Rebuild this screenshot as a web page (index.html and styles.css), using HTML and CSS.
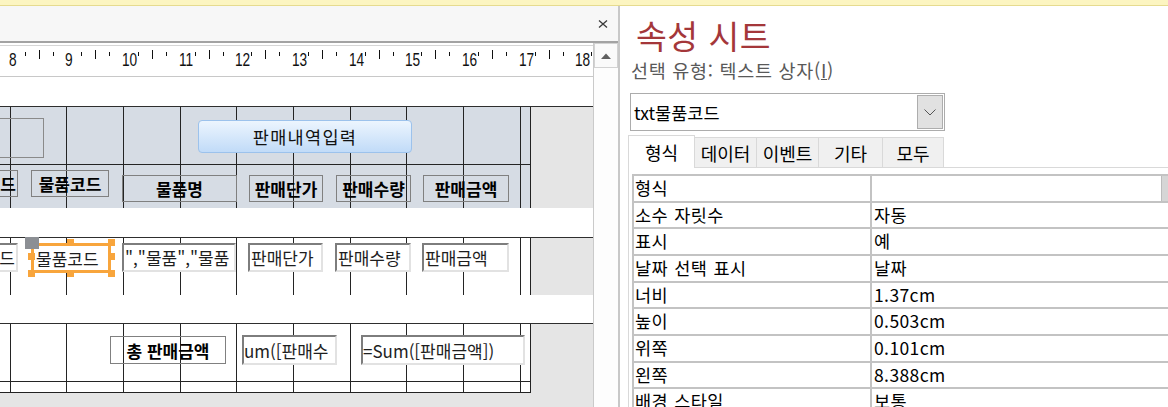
FILE: index.html
```html
<!DOCTYPE html>
<html lang="ko">
<head>
<meta charset="utf-8">
<title>속성 시트</title>
<link rel="stylesheet" href="styles.css">
</head>
<body>
<div class="topbar"></div>
<div class="main">
  <section class="designer">
    <div class="titlebar">
      <svg class="close" width="10" height="10" viewBox="0 0 10 10"><path d="M1 1.5L9 8.5M9 1.5L1 8.5" stroke="#3a3a3a" stroke-width="1.3" fill="none"/></svg>
    </div>
    <div class="dbody">
      <div class="canvas">
        <div class="ruler">
          <div class="rc"><span class="rn">8</span></div>
          <div class="rc"><span class="rn">9</span></div>
          <div class="rc"><span class="rn">10</span></div>
          <div class="rc"><span class="rn">11</span></div>
          <div class="rc"><span class="rn">12</span></div>
          <div class="rc"><span class="rn">13</span></div>
          <div class="rc"><span class="rn">14</span></div>
          <div class="rc"><span class="rn">15</span></div>
          <div class="rc"><span class="rn">16</span></div>
          <div class="rc"><span class="rn">17</span></div>
          <div class="rc"><span class="rn">18</span></div>
        </div>

        <div class="bar"></div>
        <div class="sec">
          <div class="form hdr">
            <div class="ctl box0"></div>
            <div class="ctl btn">판매내역입력</div>
            <div class="ctl lbl l0">판매코드</div>
            <div class="ctl lbl l1">물품코드</div>
            <div class="ctl lbl l2">물품명</div>
            <div class="ctl lbl l3">판매단가</div>
            <div class="ctl lbl l4">판매수량</div>
            <div class="ctl lbl l5">판매금액</div>
          </div>
        </div>

        <div class="bar"></div>
        <div class="sec">
          <div class="form det">
            <div class="ctl tb t0">판매코드</div>
            <div class="ctl sel">물품코드</div>
            <div class="mv"></div>
            <div class="hd hx1 hy1"></div>
            <div class="hd hx2 hy1"></div>
            <div class="hd hx0 hy2"></div>
            <div class="hd hx2 hy2"></div>
            <div class="hd hx0 hy3"></div>
            <div class="hd hx1 hy3"></div>
            <div class="hd hx2 hy3"></div>
            <div class="ctl tb t2">","물품","물품</div>
            <div class="ctl tb t3">판매단가</div>
            <div class="ctl tb t4">판매수량</div>
            <div class="ctl tb t5">판매금액</div>
          </div>
        </div>

        <div class="bar bar3"></div>
        <div class="sec">
          <div class="form ftr">
            <div class="ctl lbl f1">총 판매금액</div>
            <div class="ctl tb f2">um([판매수</div>
            <div class="ctl tb f3">=Sum([판매금액])</div>
          </div>
        </div>
      </div>
      <div class="vscroll">
        <div class="sbtn"><svg width="10" height="6" viewBox="0 0 10 6"><path d="M0 6L5 0.5L10 6Z" fill="#606060"/></svg></div>
      </div>
    </div>
  </section>

  <section class="props">
    <div class="ptitle">속성 시트</div>
    <div class="psub">선택 유형: 텍스트 상자(<u>I</u>)</div>
    <div class="combo">
      <span class="ctext">txt물품코드</span>
      <span class="cbtn"><svg width="12" height="7" viewBox="0 0 12 7"><path d="M0.5 0.5L6 6L11.5 0.5" stroke="#555" stroke-width="1" fill="none"/></svg></span>
    </div>
    <div class="tabs">
      <div class="tab active w1">형식</div>
      <div class="tab w2">데이터</div>
      <div class="tab w3">이벤트</div>
      <div class="tab w4">기타</div>
      <div class="tab w5">모두</div>
    </div>
    <div class="tabbody">
      <div class="pgrid">
        <div class="pk">형식</div><div class="pv pcombo"><span class="stub"></span></div>
        <div class="pk">소수 자릿수</div><div class="pv">자동</div>
        <div class="pk">표시</div><div class="pv">예</div>
        <div class="pk">날짜 선택 표시</div><div class="pv">날짜</div>
        <div class="pk">너비</div><div class="pv">1.37cm</div>
        <div class="pk">높이</div><div class="pv">0.503cm</div>
        <div class="pk">위쪽</div><div class="pv">0.101cm</div>
        <div class="pk">왼쪽</div><div class="pv">8.388cm</div>
        <div class="pk">배경 스타일</div><div class="pv">보통</div>
      </div>
    </div>
  </section>
</div>
</body>
</html>
```

FILE: styles.css
```css
html, body {
  margin: 0;
  padding: 0;
}
body {
  width: 1168px;
  height: 407px;
  overflow: hidden;
  background: #fff;
  font-family: "Noto Sans CJK KR", "Noto Sans", sans-serif;
  color: #000;
}

.topbar {
  height: 5px;
  background: #fcf5c1;
  border-bottom: 1px solid #e6db8f;
}

.main {
  display: flex;
  height: 401px;
}

/* ---------- designer ---------- */
.designer {
  flex: none;
  width: 618px;
  border-right: 2px solid #c8c8c8;
  display: flex;
  flex-direction: column;
  background: #f7f7f7;
}
.titlebar {
  height: 35px;
  display: flex;
  justify-content: flex-end;
  align-items: center;
  padding-right: 10px;
}
.close { display: block; }

.dbody {
  flex: 1;
  min-height: 0;
  display: flex;
  border-top: 2px solid #a3a3a3;
}
.canvas {
  flex: none;
  width: 593px;
  display: flex;
  flex-direction: column;
  overflow: hidden;
  background: #e5e5e5;
}
.vscroll {
  flex: none;
  width: 24px;
  border-left: 1px solid #cacaca;
  background: #fdfdfd;
  display: flex;
  flex-direction: column;
}
.sbtn {
  height: 25px;
  box-sizing: border-box;
  border: 1px solid #d2d2d2;
  background: #fafafa;
  display: flex;
  align-items: center;
  justify-content: center;
}
.sbtn svg { display: block; }

/* ruler */
.ruler {
  flex: none;
  height: 34px;
  box-sizing: border-box;
  border-bottom: 1px solid #c8c8c8;
  background: linear-gradient(#d6d6d6, #d6d6d6) 0 2px / 100% 1px no-repeat, #fff;
  display: flex;
  padding-left: 8.5px;
  overflow: hidden;
}
.rc {
  flex: none;
  width: 56.69px;
  box-sizing: border-box;
  padding-top: 7px;
  background:
    linear-gradient(#111, #111) 16px 9px / 1px 4px no-repeat,
    linear-gradient(#111, #111) 30px 7px / 1px 9px no-repeat,
    linear-gradient(#111, #111) 44px 9px / 1px 4px no-repeat;
}
.rn {
  display: block;
  font-family: "Liberation Sans", Arial, sans-serif;
  font-size: 19px;
  line-height: 19px;
  color: #111;
  transform: scaleX(0.72);
  transform-origin: 0 0;
}

/* section bars */
.bar {
  flex: none;
  height: 29px;
  background: #fff;
  border-bottom: 1px solid #2e2e2e;
}
.bar3 { height: 28px; }

.sec {
  flex: none;
  display: flex;
}
.form {
  flex: none;
  position: relative;
  width: 530px;
  border-right: 1px solid #222;
  background-image:
    linear-gradient(to bottom, transparent 57px, #242424 57px 58px, transparent 58px),
    linear-gradient(to right,
      transparent 10px, #242424 10px 11px,
      transparent 11px 66px, #242424 66px 67px,
      transparent 67px 123px, #242424 123px 124px,
      transparent 124px 180px, #242424 180px 181px,
      transparent 181px 236px, #242424 236px 237px,
      transparent 237px 293px, #242424 293px 294px,
      transparent 294px 350px, #242424 350px 351px,
      transparent 351px 406px, #242424 406px 407px,
      transparent 407px 463px, #242424 463px 464px,
      transparent 464px 520px, #242424 520px 521px,
      transparent 521px);
  background-repeat: no-repeat;
}
.hdr { height: 101px; background-color: #d6dce4; }
.det { height: 57px; background-color: #fff; }
.ftr { height: 68px; background-color: #fff; border-bottom: 1px solid #222; }

/* controls on the form canvas */
.ctl {
  position: absolute;
  box-sizing: border-box;
  display: flex;
  align-items: center;
  white-space: nowrap;
  overflow: hidden;
  font-size: 17px;
}
.box0 { left: -2px; top: 11px; width: 46px; height: 40px; border: 1px solid #8a8a8a; }
.btn {
  left: 198px; top: 13px; width: 214px; height: 33px;
  border: 1px solid #9cc2ec;
  border-radius: 4px;
  background: linear-gradient(#ecf5fe, #c1dbf8);
  justify-content: center;
  font-size: 17.5px;
  letter-spacing: 1.3px;
  color: #111;
}
.lbl {
  border: 1px solid #808080;
  font-weight: bold;
  justify-content: center;
  color: #000;
}
.l0 { left: -60px; top: 63px; width: 78px; height: 27px; justify-content: flex-end; padding-right: 1px; }
.l1 { left: 31px; top: 63px; width: 78px; height: 27px; }
.l2 { left: 122px; top: 68px; width: 115px; height: 27px; }
.l3 { left: 249px; top: 68px; width: 74px; height: 27px; }
.l4 { left: 336px; top: 68px; width: 75px; height: 27px; }
.l5 { left: 423px; top: 68px; width: 86px; height: 27px; }

.tb {
  border: 2px solid;
  border-color: #7d7d7d #e2e2e2 #e2e2e2 #7d7d7d;
  background: #fff;
  padding-left: 1px;
  color: #1e1e1e;
}
.t0 { left: -60px; top: 5px; width: 78px; height: 29px; justify-content: flex-end; padding-right: 1px; }
.t2 { left: 122px; top: 5px; width: 114px; height: 29px; }
.t3 { left: 248px; top: 5px; width: 75px; height: 29px; }
.t4 { left: 335px; top: 5px; width: 76px; height: 29px; }
.t5 { left: 422px; top: 5px; width: 87px; height: 29px; }

.sel {
  left: 31px; top: 5px; width: 80px; height: 30px;
  border: 3px solid #f8a53c;
  background: #fff;
  padding-left: 2px;
  color: #1e1e1e;
}
.mv {
  position: absolute;
  left: 25px; top: -1px;
  width: 14px; height: 12px;
  background: #8c8f94;
}
.hd {
  position: absolute;
  width: 7px; height: 7px;
  background: #f8a53c;
}
.hx0 { left: 28px; }
.hx1 { left: 67px; }
.hx2 { left: 108px; }
.hy1 { top: 1px; }
.hy2 { top: 15px; }
.hy3 { top: 32px; }

.f1 { left: 110px; top: 12px; width: 116px; height: 28px; }
.f2 { left: 242px; top: 11px; width: 95px; height: 30px; padding-left: 0; }
.f3 { left: 361px; top: 11px; width: 164px; height: 30px; padding-left: 0; }

/* ---------- property sheet ---------- */
.props {
  flex: 1;
  min-width: 0;
  background: #fff;
  padding-left: 8px;
  overflow: hidden;
}
.ptitle {
  margin-top: 8px;
  padding-left: 8px;
  height: 41px;
  font-size: 33.5px;
  line-height: 41px;
  letter-spacing: 0.5px;
  color: #a4373a;
}
.psub {
  margin-top: 4px;
  padding-left: 3px;
  height: 22px;
  font-size: 18.5px;
  line-height: 22px;
  letter-spacing: 0.7px;
  color: #595959;
}
.combo {
  margin-top: 12px;
  margin-left: 2px;
  width: 315px;
  height: 38px;
  box-sizing: border-box;
  border: 1px solid #acacac;
  display: flex;
  align-items: center;
}
.ctext {
  padding-left: 3px;
  font-size: 17.5px;
}
.cbtn {
  margin-left: auto;
  margin-right: 1px;
  width: 26px;
  height: 34px;
  box-sizing: border-box;
  background: #e1e1e1;
  border: 1px solid #adadad;
  display: flex;
  align-items: center;
  justify-content: center;
}
.cbtn svg { display: block; }

.tabs {
  margin-top: 4px;
  height: 32px;
  display: flex;
  align-items: flex-end;
  position: relative;
  z-index: 1;
}
.tab {
  height: 30px;
  box-sizing: border-box;
  border: 1px solid #d9d9d9;
  border-bottom: none;
  margin-left: -1px;
  background: #f0f0f0;
  display: flex;
  align-items: center;
  justify-content: center;
  font-size: 18px;
}
.tab.active {
  margin-left: 0;
  height: 33px;
  margin-bottom: -1px;
  background: #fff;
}
.w1 { width: 67px; }
.w2 { width: 63px; }
.w3 { width: 63px; }
.w4 { width: 65px; }
.w5 { width: 62px; }

.tabbody {
  border-top: 1px solid #d9d9d9;
  border-left: 1px solid #d9d9d9;
  padding: 6px 0 0 3px;
}
.pgrid {
  display: grid;
  grid-template-columns: 236px 300px;
  grid-auto-rows: 24.67px;
  gap: 2px;
  padding: 2px 0 0 2px;
  background: #c3c3c3;
  width: max-content;
}
.pk, .pv {
  background: #fff;
  font-size: 17.5px;
  line-height: 24.67px;
  letter-spacing: 0.4px;
  word-spacing: 1px;
  white-space: nowrap;
  overflow: hidden;
}
.pk { padding-left: 1px; }
.pv { padding-left: 2px; }
.pcombo {
  display: flex;
  justify-content: flex-end;
  padding-left: 0;
}
.stub {
  width: 10px;
  background: #d6d6d6;
  border-left: 1px solid #bcbcbc;
}
```
